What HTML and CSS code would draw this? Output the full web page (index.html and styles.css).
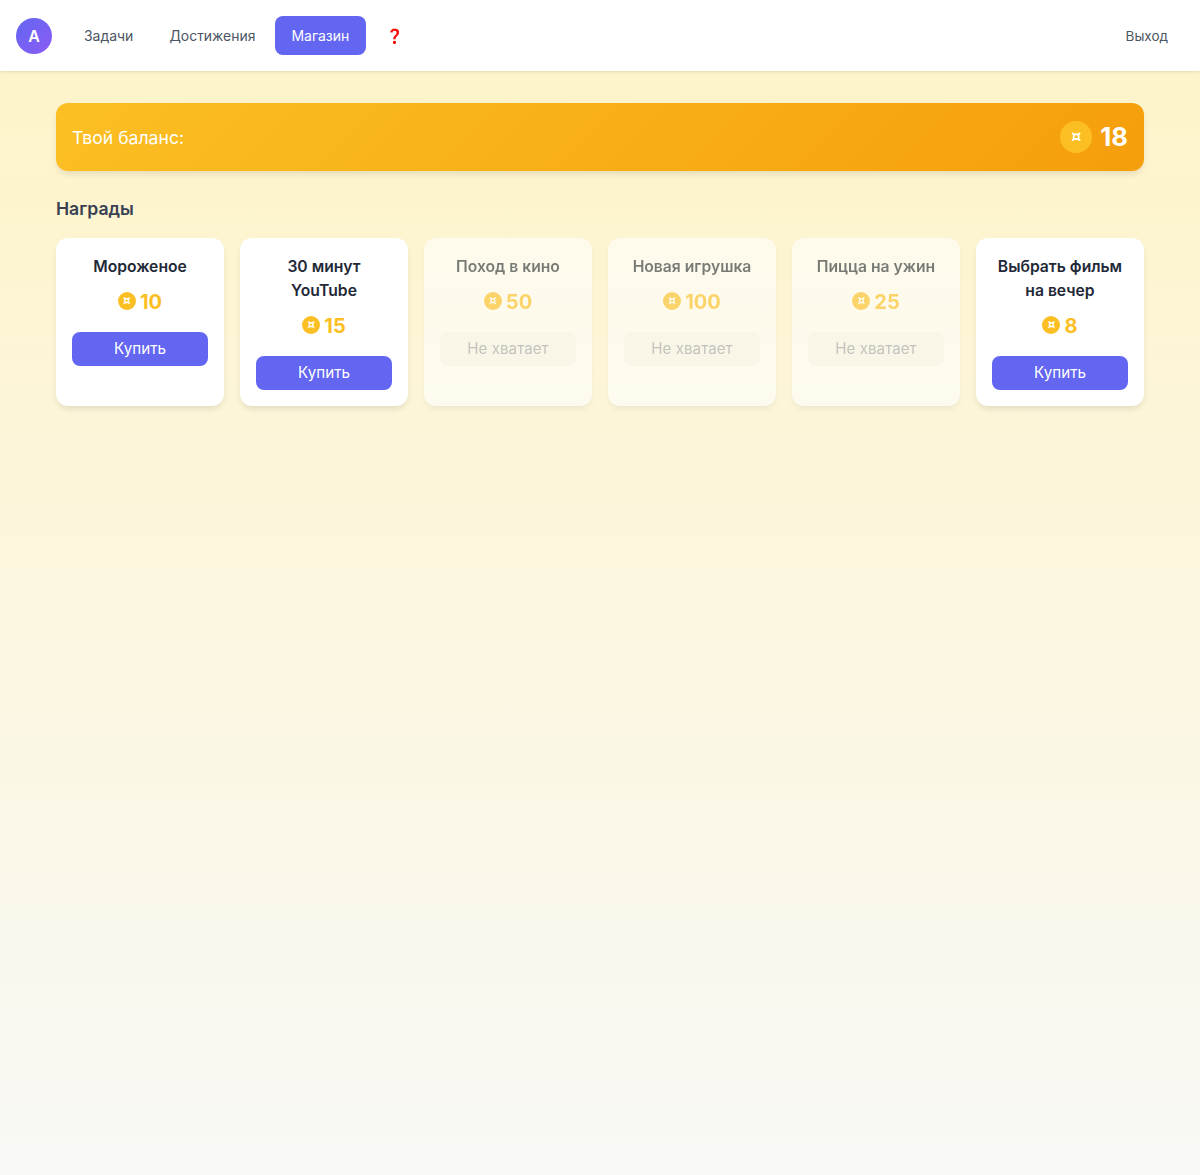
FILE: index.html
```html
<!DOCTYPE html>
<html lang="ru">
<head>
  <meta charset="UTF-8" />
  <meta name="viewport" content="width=device-width, initial-scale=1" />
  <title>Магазин</title>
  <link rel="stylesheet" href="styles.css">
</head>
<body>
  <header class="topbar">
    <div class="avatar">A</div>
    <nav class="nav">
      <a class="nav-link" href="#">Задачи</a>
      <a class="nav-link" href="#">Достижения</a>
      <a class="nav-link active" href="#">Магазин</a>
      <a class="nav-link help" href="#">❓</a>
    </nav>
    <a class="logout" href="#">Выход</a>
  </header>

  <main class="content">
    <section class="balance">
      <span class="balance-label">Твой баланс:</span>
      <div class="balance-value">
        <span class="coin coin-big">¤</span>
        <span class="num">18</span>
      </div>
    </section>

    <h2 class="section-title">Награды</h2>

    <div class="rewards">
      <div class="card">
        <div class="card-name">Мороженое</div>
        <div class="price"><span class="coin">¤</span><span class="num">10</span></div>
        <button class="buy-btn">Купить</button>
      </div>
      <div class="card">
        <div class="card-name">30 минут YouTube</div>
        <div class="price"><span class="coin">¤</span><span class="num">15</span></div>
        <button class="buy-btn">Купить</button>
      </div>
      <div class="card disabled">
        <div class="card-name">Поход в кино</div>
        <div class="price"><span class="coin">¤</span><span class="num">50</span></div>
        <button class="buy-btn">Не хватает</button>
      </div>
      <div class="card disabled">
        <div class="card-name">Новая игрушка</div>
        <div class="price"><span class="coin">¤</span><span class="num">100</span></div>
        <button class="buy-btn">Не хватает</button>
      </div>
      <div class="card disabled">
        <div class="card-name">Пицца на ужин</div>
        <div class="price"><span class="coin">¤</span><span class="num">25</span></div>
        <button class="buy-btn">Не хватает</button>
      </div>
      <div class="card">
        <div class="card-name">Выбрать фильм на вечер</div>
        <div class="price"><span class="coin">¤</span><span class="num">8</span></div>
        <button class="buy-btn">Купить</button>
      </div>
    </div>
  </main>
</body>
</html>
```

FILE: styles.css
```css
* {
  box-sizing: border-box;
}

body {
  margin: 0;
  min-height: 1175px;
  font-family: 'Inter', 'Liberation Sans', sans-serif;
  line-height: 1.5;
  color: #1f2937;
  background: linear-gradient(180deg, #fef3c7 0%, #f9f9f6 100%);
}

.topbar {
  display: flex;
  align-items: center;
  height: 71px;
  padding: 0 16px;
  background: #fff;
  box-shadow: 0 1px 3px rgba(0, 0, 0, 0.1);
}

.avatar {
  display: flex;
  align-items: center;
  justify-content: center;
  width: 36px;
  height: 36px;
  border-radius: 50%;
  background: linear-gradient(135deg, #6366f1, #8b5cf6);
  color: #fff;
  font-weight: 600;
  font-size: 16px;
}

.nav {
  display: flex;
  gap: 4px;
  margin-left: 16px;
}

.nav-link {
  padding: 9px 16px;
  border-radius: 8px;
  color: #4b5563;
  font-size: 13.96px;
  line-height: 21px;
  text-decoration: none;
}

.nav-link.active {
  padding-right: 17px;
  background: #6366f1;
  color: #fff;
}

.nav-link.help {
  filter: saturate(2) brightness(0.85) contrast(1.3);
}

.logout {
  margin-left: auto;
  padding: 10px 16px 8px;
  color: #4b5563;
  font-size: 13.5px;
  line-height: 21px;
  text-decoration: none;
}

.content {
  padding: 32px 56px;
}

.balance {
  display: flex;
  align-items: center;
  justify-content: space-between;
  height: 68px;
  padding: 16px;
  border-radius: 12px;
  background: linear-gradient(135deg, #fbbf24, #f59e0b);
  box-shadow: 0 4px 6px -1px rgba(0, 0, 0, 0.1);
  color: #fff;
}

.balance-label {
  padding-top: 2px;
  font-size: 17.6px;
}

.balance-value {
  display: flex;
  align-items: center;
  gap: 8px;
  font-size: 25.6px;
  font-weight: 700;
}

.num {
  padding-top: 1px;
}

.coin {
  display: inline-flex;
  align-items: center;
  justify-content: center;
  width: 18px;
  height: 18px;
  margin-right: 4px;
  border-radius: 50%;
  background: #fbbf24;
  color: #fff;
  font-family: 'DejaVu Sans', sans-serif;
  font-size: 12px;
  font-weight: 700;
}

.coin-big {
  width: 32px;
  height: 32px;
  margin-right: 0;
  font-size: 16px;
}

.section-title {
  margin: 24px 0 16px;
  font-size: 17.6px;
  font-weight: 600;
  line-height: 27px;
  color: #374151;
}

.rewards {
  display: grid;
  grid-template-columns: repeat(6, 1fr);
  gap: 16px;
}

.card {
  padding: 16px;
  min-height: 168px;
  border-radius: 12px;
  background: #fff;
  box-shadow: 0 4px 6px -1px rgba(0, 0, 0, 0.1);
  text-align: center;
}

.card.disabled {
  opacity: 0.6;
}

.card-name {
  padding-top: 1px;
  font-size: 15.68px;
  font-weight: 600;
  line-height: 24px;
}

.price {
  display: flex;
  align-items: center;
  justify-content: center;
  height: 30px;
  margin: 7px 0 16px;
  color: #fbbf24;
  font-size: 20px;
  font-weight: 700;
}

.buy-btn {
  display: block;
  width: 100%;
  height: 34px;
  padding-bottom: 2px;
  border: none;
  border-radius: 8px;
  background: #6366f1;
  color: #fff;
  font-family: inherit;
  font-size: 15.2px;
  cursor: pointer;
}

.disabled .buy-btn {
  background: #f9f8f3;
  color: #9ca3af;
}
```
